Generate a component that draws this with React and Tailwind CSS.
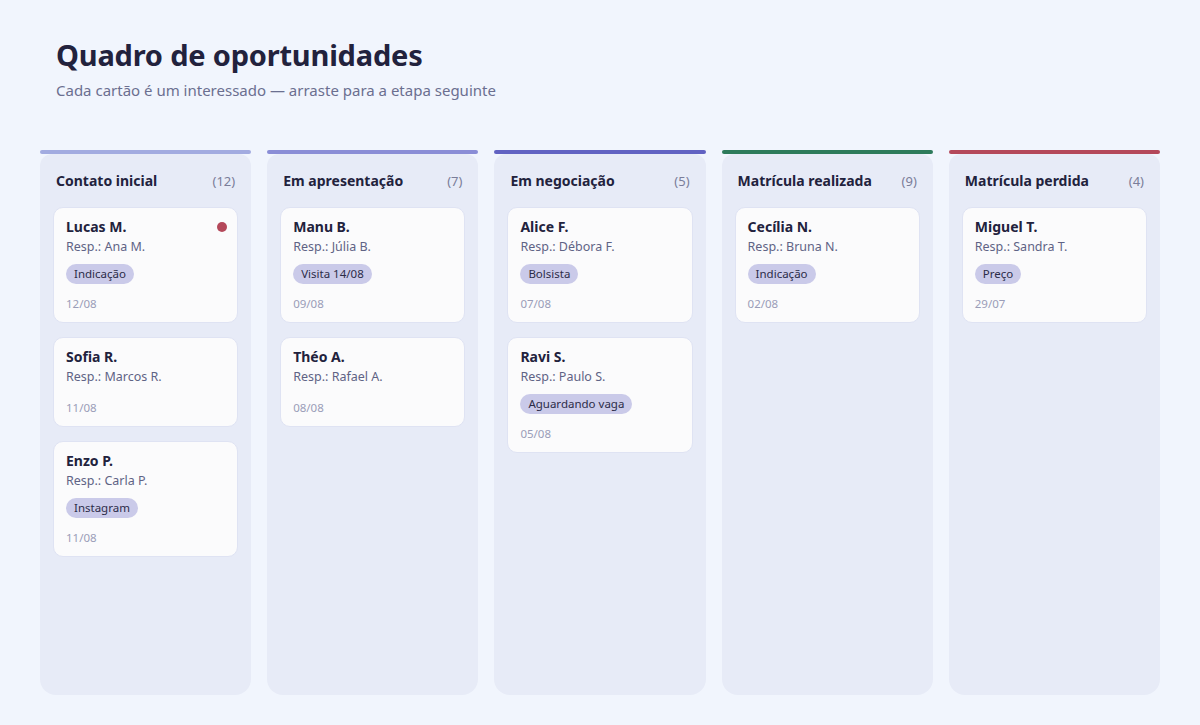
import React from "react";

const columns = [
  {
    title: "Contato inicial",
    count: 12,
    bar: "bg-[#a2abe0]",
    cards: [
      { name: "Lucas M.", resp: "Ana M.", tag: "Indicação", date: "12/08", dot: true },
      { name: "Sofia R.", resp: "Marcos R.", date: "11/08" },
      { name: "Enzo P.", resp: "Carla P.", tag: "Instagram", date: "11/08" },
    ],
  },
  {
    title: "Em apresentação",
    count: 7,
    bar: "bg-[#8a8dd6]",
    cards: [
      { name: "Manu B.", resp: "Júlia B.", tag: "Visita 14/08", date: "09/08" },
      { name: "Théo A.", resp: "Rafael A.", date: "08/08" },
    ],
  },
  {
    title: "Em negociação",
    count: 5,
    bar: "bg-[#6162c2]",
    cards: [
      { name: "Alice F.", resp: "Débora F.", tag: "Bolsista", date: "07/08" },
      { name: "Ravi S.", resp: "Paulo S.", tag: "Aguardando vaga", date: "05/08" },
    ],
  },
  {
    title: "Matrícula realizada",
    count: 9,
    bar: "bg-[#2e7b5b]",
    cards: [{ name: "Cecília N.", resp: "Bruna N.", tag: "Indicação", date: "02/08" }],
  },
  {
    title: "Matrícula perdida",
    count: 4,
    bar: "bg-[#b4485a]",
    cards: [{ name: "Miguel T.", resp: "Sandra T.", tag: "Preço", date: "29/07" }],
  },
];

function Card({ card }) {
  return (
    <div className="relative bg-[#fbfbfc] border border-[#dfe3f3] rounded-[10px] px-[12px] pt-[9px] pb-[10px]">
      {card.dot && (
        <span className="absolute right-[10px] top-[14px] w-[10px] h-[10px] rounded-full bg-[#b4485a]" />
      )}
      <div className="text-[14px] leading-5 font-bold text-[#22223d]">{card.name}</div>
      <div className="text-[12.5px] leading-5 text-[#5f6385]">Resp.: {card.resp}</div>
      {card.tag && (
        <div className="mt-[7px] flex">
          <span className="h-5 leading-5 px-[8px] rounded-full bg-[#cacae9] text-[11.5px] text-[#2c2c48]">
            {card.tag}
          </span>
        </div>
      )}
      <div className={card.tag ? "mt-3 text-[11.5px] leading-4 text-[#9a9db8]" : "mt-[13px] text-[11.5px] leading-4 text-[#9a9db8]"}>
        {card.date}
      </div>
    </div>
  );
}

export default function App() {
  return (
    <div
      className="min-h-screen bg-[#f1f5fd] pt-[35px] pb-[30px] px-10"
      style={{ fontFamily: '"Noto Sans", "Open Sans", sans-serif' }}
    >
      <div className="px-4">
        <h1 className="text-[29px] leading-[40px] font-bold text-[#22223d] tracking-[-0.2px]">
          Quadro de oportunidades
        </h1>
        <p className="mt-[4px] text-[15px] leading-[22px] text-[#6b6f90]">
          Cada cartão é um interessado — arraste para a etapa seguinte
        </p>
      </div>

      <div className="mt-[49px] grid grid-cols-5 gap-4 h-[545px]">
        {columns.map((col) => (
          <div key={col.title} className="flex flex-col">
            <div className={`h-1 rounded-full ${col.bar}`} />
            <div className="flex-1 bg-[#e7ebf7] rounded-b-2xl rounded-t-xl px-[13px]">
              <div className="flex items-center justify-between px-[3px] pt-[17px] pb-[16px]">
                <span className="text-[14px] leading-5 font-bold text-[#22223d]">{col.title}</span>
                <span className="text-[13px] leading-5 text-[#7a7d99]">({col.count})</span>
              </div>
              <div className="flex flex-col gap-[14px]">
                {col.cards.map((c) => (
                  <Card key={c.name} card={c} />
                ))}
              </div>
            </div>
          </div>
        ))}
      </div>
    </div>
  );
}
